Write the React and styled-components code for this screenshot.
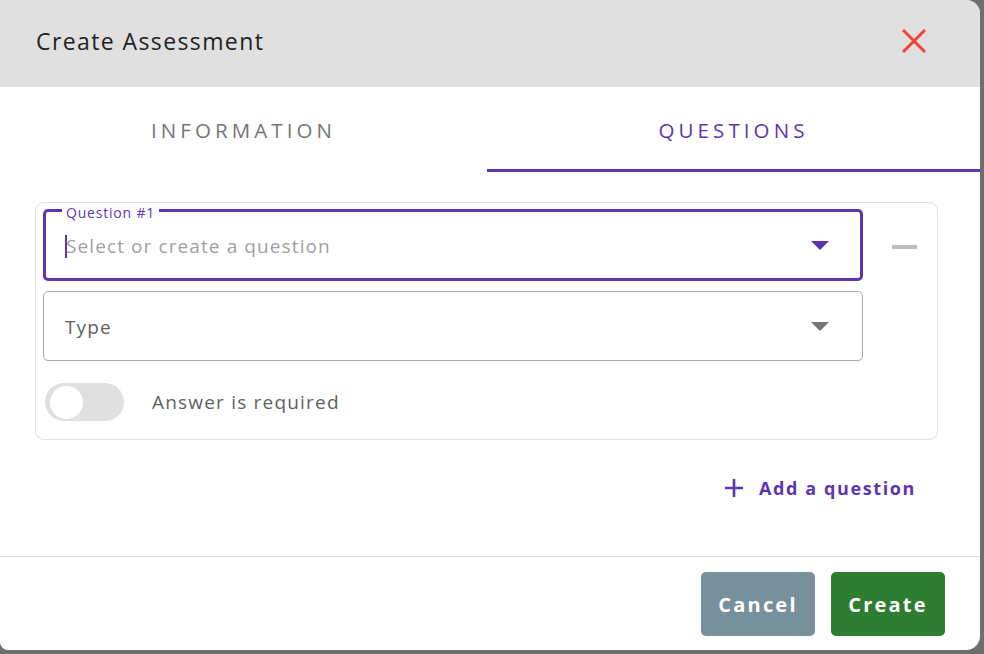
import React, { useState } from 'react';
import styled, { createGlobalStyle } from 'styled-components';

const GlobalStyle = createGlobalStyle`
  html, body {
    margin: 0;
    padding: 0;
    background: #6e6e6e;
  }
  body {
    font-family: 'Open Sans', 'Noto Sans', sans-serif;
  }
  * {
    box-sizing: border-box;
  }
`;

const purple = '#5e35b1';

const Dialog = styled.div`
  width: 980px;
  height: 650px;
  background: #fff;
  border-radius: 0 14px 14px 8px;
  overflow: hidden;
  display: flex;
  flex-direction: column;
`;

const Header = styled.div`
  height: 87px;
  flex-shrink: 0;
  background: #e0e0e0;
  display: flex;
  align-items: center;
  justify-content: space-between;
  padding: 0 52px 0 36px;
`;

const Title = styled.h2`
  margin: 0;
  font-size: 23px;
  font-weight: 400;
  color: #222;
  letter-spacing: 1.4px;
  padding-bottom: 5px;
`;

const CloseButton = styled.button`
  border: none;
  background: none;
  padding: 0;
  width: 28px;
  height: 28px;
  display: flex;
  align-items: center;
  justify-content: center;
  cursor: pointer;
  margin-bottom: 6px;
`;

const Tabs = styled.div`
  height: 85px;
  flex-shrink: 0;
  display: grid;
  grid-template-columns: 487px 1fr;
`;

const Tab = styled.button`
  border: none;
  background: none;
  font-family: inherit;
  font-size: 20.5px;
  letter-spacing: 4.1px;
  text-transform: uppercase;
  color: ${p => (p.active ? purple : '#757575')};
  border-bottom: 3px solid ${p => (p.active ? purple : 'transparent')};
  padding: 4px 0 0;
  cursor: pointer;
`;

const Content = styled.div`
  flex: 1;
  padding: 30px 42px 0 35px;
  display: flex;
  flex-direction: column;
`;

const Card = styled.div`
  border: 1px solid #dedede;
  border-radius: 9px;
  padding: 6px 0 18px 7px;
  display: grid;
  grid-template-columns: 820px 1fr;
`;

const Fields = styled.div`
  display: flex;
  flex-direction: column;
  gap: 10px;
`;

const Field = styled.div`
  position: relative;
  height: ${p => (p.focused ? 72 : 70)}px;
  border: ${p => (p.focused ? `3px solid ${purple}` : '1px solid #a8a8a8')};
  border-radius: 5px;
  display: flex;
  align-items: center;
  justify-content: space-between;
  padding: 0 ${p => (p.focused ? 31 : 33)}px 0 ${p => (p.focused ? 19 : 21)}px;
`;

const Legend = styled.span`
  position: absolute;
  top: -9px;
  left: 16px;
  padding: 0 4px;
  background: #fff;
  color: ${purple};
  font-size: 14px;
  letter-spacing: 0.8px;
  line-height: 20px;
`;

const Value = styled.span`
  display: flex;
  align-items: center;
  font-size: 19px;
  letter-spacing: 1.1px;
  padding-top: 2px;
  color: ${p => (p.placeholder ? '#a0a0a0' : '#616161')};
`;

const Caret = styled.span`
  width: 2px;
  height: 23px;
  background: ${purple};
  margin-right: -1px;
`;

const Side = styled.div`
  display: flex;
  justify-content: flex-start;
  padding-top: 36px;
  padding-left: 29px;
`;

const Minus = styled.span`
  width: 25px;
  height: 4px;
  background: #bdbdbd;
`;

const ToggleRow = styled.label`
  display: flex;
  align-items: center;
  gap: 28px;
  margin-top: 12px;
  padding-left: 2px;
  font-size: 19px;
  letter-spacing: 1.2px;
  color: #616161;
  cursor: pointer;
`;

const Track = styled.span`
  width: 79px;
  height: 38px;
  border-radius: 19px;
  background: ${p => (p.on ? '#b39ddb' : '#e0e0e0')};
  display: flex;
  align-items: center;
  padding: 0 3px;
  justify-content: ${p => (p.on ? 'flex-end' : 'flex-start')};
`;

const Thumb = styled.span`
  width: 33px;
  height: 33px;
  border-radius: 50%;
  background: ${p => (p.on ? purple : '#fff')};
  margin-left: 2px;
`;

const AddRow = styled.div`
  display: flex;
  justify-content: flex-end;
  margin-top: 36px;
`;

const AddButton = styled.button`
  border: none;
  background: none;
  display: flex;
  align-items: center;
  gap: 16px;
  font-family: inherit;
  font-size: 18px;
  font-weight: 700;
  letter-spacing: 1.6px;
  color: ${purple};
  padding: 0 22px 0 0;
  cursor: pointer;
`;

const Footer = styled.div`
  height: 94px;
  flex-shrink: 0;
  border-top: 1px solid #e0e0e0;
  display: flex;
  justify-content: flex-end;
  gap: 16px;
  padding: 15px 35px 0 0;
`;

const ActionButton = styled.button`
  width: 114px;
  height: 64px;
  border: none;
  border-radius: 5px;
  background: ${p => p.bg};
  color: #fff;
  font-family: inherit;
  font-size: 20px;
  font-weight: 700;
  letter-spacing: 2.2px;
  cursor: pointer;
`;

function Arrow({ color }) {
  return (
    <svg width="18" height="9" viewBox="0 0 18 9">
      <path d="M0 0 L18 0 L9 9 Z" fill={color} />
    </svg>
  );
}

export default function App() {
  const [tab, setTab] = useState('questions');
  const [required, setRequired] = useState(false);

  return (
    <>
      <GlobalStyle />
      <Dialog>
        <Header>
          <Title>Create Assessment</Title>
          <CloseButton aria-label="Close">
            <svg width="24" height="24" viewBox="0 0 24 24">
              <path d="M1 1 L23 23 M23 1 L1 23" stroke="#f44336" strokeWidth="3" />
            </svg>
          </CloseButton>
        </Header>
        <Tabs>
          <Tab active={tab === 'information'} onClick={() => setTab('information')}>
            Information
          </Tab>
          <Tab active={tab === 'questions'} onClick={() => setTab('questions')}>
            Questions
          </Tab>
        </Tabs>
        <Content>
          <Card>
            <Fields>
              <Field focused>
                <Legend>Question #1</Legend>
                <Value placeholder>
                  <Caret />
                  Select or create a question
                </Value>
                <Arrow color={purple} />
              </Field>
              <Field>
                <Value>Type</Value>
                <Arrow color="#757575" />
              </Field>
              <ToggleRow onClick={() => setRequired(!required)}>
                <Track on={required}>
                  <Thumb on={required} />
                </Track>
                Answer is required
              </ToggleRow>
            </Fields>
            <Side>
              <Minus />
            </Side>
          </Card>
          <AddRow>
            <AddButton>
              <svg width="18" height="18" viewBox="0 0 18 18">
                <path d="M9 0 V18 M0 9 H18" stroke={purple} strokeWidth="2.6" />
              </svg>
              Add a question
            </AddButton>
          </AddRow>
        </Content>
        <Footer>
          <ActionButton bg="#78909c">Cancel</ActionButton>
          <ActionButton bg="#2e7d32">Create</ActionButton>
        </Footer>
      </Dialog>
    </>
  );
}
